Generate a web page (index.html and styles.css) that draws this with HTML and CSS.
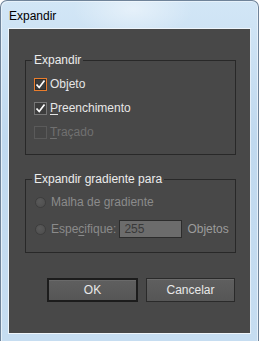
FILE: index.html
```html
<!DOCTYPE html>
<html>

<head>
	<meta http-equiv="Content-Type" content="text/html; charset=utf-8" />
	<title>Expandir</title>
	<link rel="stylesheet" href="styles.css">
</head>

<body>
	<div class="window">
		<div class="titlebar">Expandir</div>
		<div class="client">
			<fieldset class="group group-expand">
				<legend>Expandir</legend>
				<label class="row">
					<span class="check checked focus">
						<svg width="11" height="11" viewBox="0 0 11 11"><path d="M1.5 5.5 L4.2 8.5 L9.5 1.5" fill="none" stroke="#fff" stroke-width="1.7" /></svg>
					</span>
					<span>Ob<u>j</u>eto</span>
				</label>
				<label class="row">
					<span class="check checked">
						<svg width="11" height="11" viewBox="0 0 11 11"><path d="M1.5 5.5 L4.2 8.5 L9.5 1.5" fill="none" stroke="#fff" stroke-width="1.7" /></svg>
					</span>
					<span><u>P</u>reenchimento</span>
				</label>
				<label class="row disabled">
					<span class="check"></span>
					<span><u>T</u>raçado</span>
				</label>
			</fieldset>
			<fieldset class="group group-gradient">
				<legend>Expandir gradiente para</legend>
				<label class="row dim">
					<span class="radio"></span>
					<span>Malha de gradiente</span>
				</label>
				<label class="row row-input dim">
					<span class="radio"></span>
					<span>Espe<u>c</u>ifique:</span>
					<span class="field">255</span>
					<span class="unit">Objetos</span>
				</label>
			</fieldset>
			<div class="buttons">
				<button class="btn btn-default">OK</button>
				<button class="btn btn-cancel">Cancelar</button>
			</div>
		</div>
	</div>
</body>

</html>
```

FILE: styles.css
```css
html,
body {
	margin: 0;
	padding: 0;
	background: #fff;
}

body {
	font-family: "Liberation Sans", Arial, sans-serif;
	font-size: 12px;
}

.window {
	box-sizing: border-box;
	display: flex;
	flex-direction: column;
	width: 259px;
	height: 341px;
	padding: 0 7px 7px 7px;
	border: 1px solid #6f8399;
	border-bottom: none;
	border-radius: 7px 7px 0 0;
	background: linear-gradient(to bottom, #d2e6f6 0%, #c0d9ef 40%, #c6ddf1 100%);
	box-shadow: inset 1px 1px 0 #e6f1fa, inset -1px 0 0 #e6f1fa;
}

.titlebar {
	height: 27px;
	padding-left: 1px;
	line-height: 30px;
	color: #000;
	background: radial-gradient(ellipse 60px 30px at 125px 8px, rgba(255, 255, 255, .45), rgba(255, 255, 255, 0));
}

.client {
	flex: 1;
	display: flex;
	flex-direction: column;
	padding: 24px 15px 0 16px;
	background-color: #484848;
	border: 1px solid #eef5fb;
	border-right-color: #e3eef8;
	color: #e6e6e6;
}

.group {
	margin: 0;
	padding: 0 0 10px 8px;
	width: 211px;
	box-sizing: border-box;
	border: 1px solid #282828;
	min-width: 0;
}

.group legend {
	margin-left: -2px;
	padding: 0 2px;
	line-height: 14px;
	color: #ececec;
}

.group-expand {
	padding-top: 5px;
}

.group-gradient {
	margin-top: 17px;
	padding-top: 4px;
}

.row {
	display: flex;
	align-items: center;
	height: 24px;
	gap: 3px;
}

.row u {
	text-decoration-thickness: 1px;
	text-underline-offset: 2px;
}

.row.disabled {
	color: #707070;
}

.row.dim {
	color: #8b8b8b;
	gap: 5px;
}

.row-input {
	height: 26px;
	margin-top: 2px;
}

.check {
	box-sizing: border-box;
	display: flex;
	align-items: center;
	justify-content: center;
	width: 13px;
	height: 13px;
	border: 1px solid #777;
	background-color: #3c3c3c;
}

.check.focus {
	border-color: #ea7d2c;
	box-shadow: inset 0 0 0 1px #2e2e2e;
}

.row.disabled .check {
	border-color: #5a5a5a;
	background-color: #464646;
}

.radio {
	box-sizing: border-box;
	width: 11px;
	height: 11px;
	margin-left: 1px;
	border-radius: 50%;
	border: 1px solid #3d3d3d;
	background: radial-gradient(circle at 40% 35%, #5a5a5a, #4c4c4c);
}

.field {
	box-sizing: border-box;
	width: 63px;
	height: 18px;
	margin-left: -2px;
	padding-left: 4px;
	line-height: 16px;
	border: 1px solid #2c2c2c;
	background-color: #6c6c6c;
	color: #393939;
}

.unit {
	color: #9c9c9c;
}

.buttons {
	display: flex;
	justify-content: flex-end;
	gap: 8px;
	margin-top: 25px;
}

.btn {
	box-sizing: border-box;
	height: 24px;
	padding: 0;
	font: inherit;
	color: #e8e8e8;
	background: linear-gradient(to bottom, #5f5f5f, #565656);
	border: 1px solid #2a2a2a;
	box-shadow: inset 0 1px 0 #6a6a6a;
}

.btn-default {
	width: 91px;
	border: 2px solid #1c1c1c;
}

.btn-cancel {
	width: 89px;
}
```
